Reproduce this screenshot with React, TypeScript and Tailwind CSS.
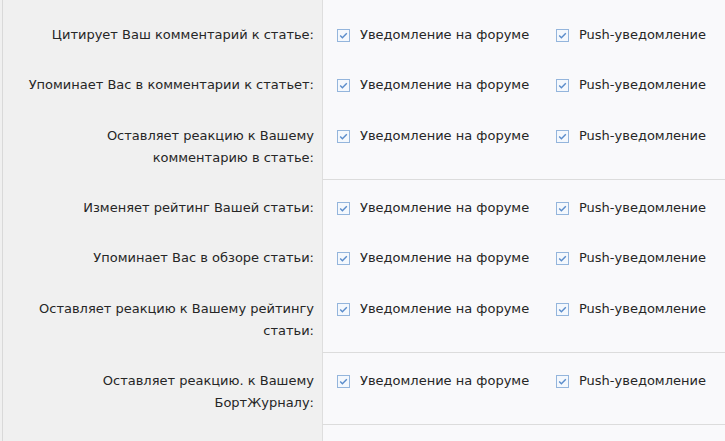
import React from "react";

type Row = { label: React.ReactNode; extra?: boolean; last?: boolean };

const rows: Row[] = [
  { label: "Цитирует Ваш комментарий к статье:" },
  { label: "Упоминает Вас в комментарии к статьет:" },
  { label: (<>Оставляет реакцию к Вашему<br />комментарию в статье:</>), extra: true, last: true },
  { label: "Изменяет рейтинг Вашей статьи:" },
  { label: "Упоминает Вас в обзоре статьи:" },
  { label: (<>Оставляет реакцию к Вашему рейтингу<br />статьи:</>), extra: true, last: true },
  { label: (<>Оставляет реакцию. к Вашему<br />БортЖурналу:</>), last: true },
];

function Check() {
  return (
    <svg width="13" height="13" viewBox="0 0 13 13" className="shrink-0">
      <rect x="0.5" y="0.5" width="12" height="12" fill="#f4f8fd" stroke="#94b5dc" />
      <path d="M3.2 6.6 L5.4 8.8 L9.8 4.2" fill="none" stroke="#5a8ccb" strokeWidth="1.4" />
    </svg>
  );
}

function Option({ text, wide }: { text: string; wide?: boolean }) {
  return (
    <label className={wide ? "flex items-center gap-[10px] w-[219px]" : "flex items-center gap-[10px]"}>
      <Check />
      <span>{text}</span>
    </label>
  );
}

export default function App() {
  return (
    <div
      className="w-[725px] h-[441px] overflow-hidden bg-[#f0f0f0] text-[13px] text-[#262626] leading-[22px] flex"
      style={{ fontFamily: '"DejaVu Sans", Verdana, sans-serif' }}
    >
      <div className="w-[2px] shrink-0" />
      <div className="w-[1px] shrink-0 bg-[#d9d9d9]" />
      <div className="flex-1 flex flex-col">
        <div className="flex h-[7px] shrink-0">
          <div className="w-[319px]" />
          <div className="flex-1 border-l border-[#dedede] bg-[#f9f9fb]" />
        </div>
        {rows.map((r, i) => (
          <div key={i} className="flex shrink-0">
            <div
              className={
                (r.extra ? "pt-[18px]" : "pt-[17px]") +
                " pb-[11px] pr-[8px] w-[319px] text-right"
              }
            >
              {r.label}
            </div>
            <div
              className={
                (r.extra ? "pt-[18px]" : "pt-[17px]") +
                " flex-1 pl-[14px] border-l border-[#dedede] bg-[#f9f9fb]" +
                (r.last ? " border-b border-b-[#dcdcdc]" : "")
              }
            >
              <div className="flex items-center h-[22px]">
                <Option text="Уведомление на форуме" wide />
                <Option text="Push-уведомление" />
              </div>
            </div>
          </div>
        ))}
        <div className="flex flex-1">
          <div className="w-[319px]" />
          <div className="flex-1 border-l border-[#dedede] bg-[#f9f9fb]" />
        </div>
      </div>
    </div>
  );
}
